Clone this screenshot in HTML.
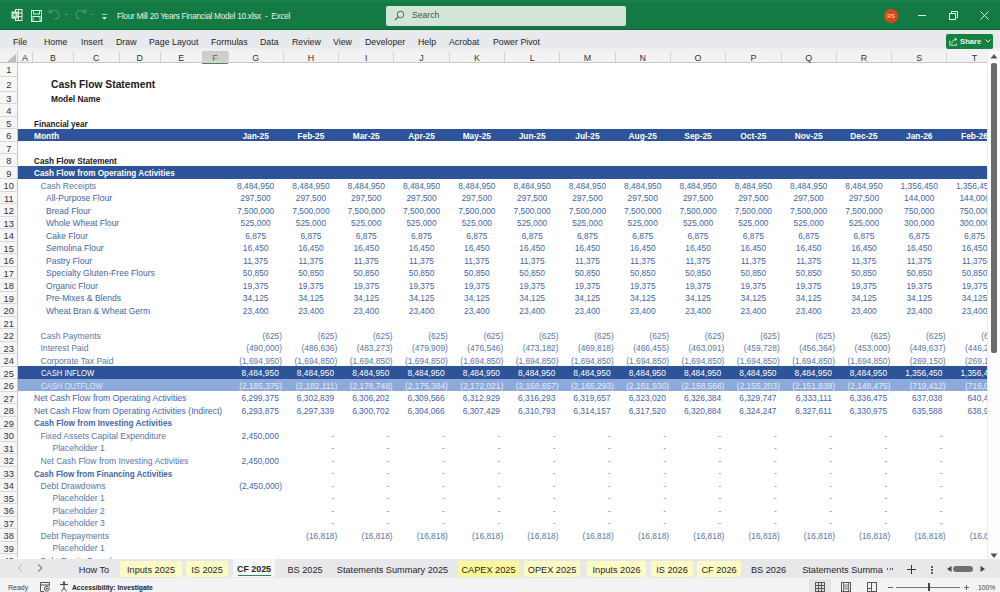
<!DOCTYPE html><html><head><meta charset="utf-8"><style>
*{margin:0;padding:0;box-sizing:border-box}
html,body{width:1000px;height:592px;overflow:hidden;background:#fff;font-family:"Liberation Sans",sans-serif}
.a{position:absolute;white-space:nowrap}
.t{position:absolute;white-space:nowrap;font-size:8.4px;line-height:12.5px;height:12.5px}
.b{font-weight:bold}
.c{text-align:center}
.r{text-align:right}
</style></head><body>
<div class="a" style="left:0;top:0;width:1000px;height:30.5px;background:#137a43"></div>
<div class="a" style="left:0;top:0;width:1000px;height:2px;background:#1a8049"></div>
<div class="a" style="left:0;top:29.3px;width:1000px;height:1.2px;background:#0f6535"></div>
<div class="a" style="left:117px;top:9px;font-size:8.3px;letter-spacing:-0.3px;line-height:14px;color:#e6f2ea">Flour Mill 20 Years Financial Model 10.xlsx&nbsp;&nbsp;-&nbsp;&nbsp;Excel</div>
<div class="a" style="left:385.5px;top:5.5px;width:240px;height:20.5px;background:#d2e5d7;border-radius:2px"></div>
<div class="a" style="left:412px;top:9px;font-size:8.6px;line-height:12px;color:#3b5a44">Search</div>
<svg class="a" style="left:394px;top:10px" width="11" height="11" viewBox="0 0 11 11"><circle cx="6.5" cy="4.5" r="3.3" fill="none" stroke="#4b6b52" stroke-width="1"/><line x1="4.1" y1="6.9" x2="1" y2="10" stroke="#4b6b52" stroke-width="1.1"/></svg>
<svg class="a" style="left:10.5px;top:9px" width="12" height="12" viewBox="0 0 12 12"><rect x="4.5" y="0.5" width="6.5" height="11" fill="none" stroke="#dff2e6" stroke-width="1"/><line x1="7.5" y1="0.5" x2="7.5" y2="11.5" stroke="#dff2e6"/><line x1="4.5" y1="4" x2="11" y2="4" stroke="#dff2e6"/><line x1="4.5" y1="7.5" x2="11" y2="7.5" stroke="#dff2e6"/><rect x="0.5" y="2.5" width="6" height="7" fill="#dff2e6"/><path d="M2 4.3 L5 7.7 M5 4.3 L2 7.7" stroke="#137a43" stroke-width="1"/></svg>
<svg class="a" style="left:31px;top:9.5px" width="11" height="12" viewBox="0 0 11 12"><rect x="0.5" y="0.5" width="10" height="11" fill="none" stroke="#dff2e6" stroke-width="1"/><rect x="2.5" y="0.5" width="6" height="3.5" fill="none" stroke="#dff2e6"/><rect x="2" y="6.5" width="7" height="5" fill="none" stroke="#dff2e6"/></svg>
<svg class="a" style="left:47.5px;top:7.5px" width="14" height="13" viewBox="0 0 14 13"><path d="M2 4 C5 1,11 2,11 7 C11 10,8 11,6 11" fill="none" stroke="#4f9a6c" stroke-width="1.1"/><path d="M1 1 L1.5 5 L5 4.5" fill="none" stroke="#4f9a6c" stroke-width="1.1"/></svg>
<div class="a" style="left:64.5px;top:14px;width:3px;height:1px;background:#4f9a6c"></div>
<svg class="a" style="left:73px;top:7.5px" width="14" height="13" viewBox="0 0 14 13"><path d="M12 4 C9 1,3 2,3 7 C3 10,6 11,8 11" fill="none" stroke="#4f9a6c" stroke-width="1.1"/><path d="M13 1 L12.5 5 L9 4.5" fill="none" stroke="#4f9a6c" stroke-width="1.1"/></svg>
<div class="a" style="left:90px;top:14px;width:3px;height:1px;background:#4f9a6c"></div>
<svg class="a" style="left:101px;top:12.5px" width="7" height="8" viewBox="0 0 8 8"><line x1="1" y1="1" x2="7" y2="1" stroke="#d0e6d8"/><path d="M1 4 L7 4 L4 7 Z" fill="#d0e6d8"/></svg>
<div class="a" style="left:884px;top:9px;width:14px;height:14px;border-radius:50%;background:#d9481c;color:#fbe3d8;font-size:5.5px;line-height:14px;text-align:center">RS</div>
<div class="a" style="left:918px;top:15px;width:8px;height:1px;background:#e8f3ec"></div>
<svg class="a" style="left:949px;top:11px" width="9" height="9" viewBox="0 0 9 9"><rect x="0.5" y="2.5" width="6" height="6" fill="none" stroke="#e8f3ec"/><path d="M2.5 2.5 V0.5 H8.5 V6.5 H6.5" fill="none" stroke="#e8f3ec"/></svg>
<svg class="a" style="left:980px;top:11px" width="9" height="9" viewBox="0 0 9 9"><path d="M0.5 0.5 L8.5 8.5 M8.5 0.5 L0.5 8.5" stroke="#e8f3ec" stroke-width="1"/></svg>
<div class="a" style="left:0;top:30px;width:1000px;height:21px;background:#e8e9ed"></div>
<div class="a" style="left:0;top:48px;width:1000px;height:3px;background:#efeff1"></div>
<div class="a" style="left:13px;top:36px;font-size:8.8px;line-height:12px;color:#262626">File</div>
<div class="a" style="left:44px;top:36px;font-size:8.8px;line-height:12px;color:#262626">Home</div>
<div class="a" style="left:81px;top:36px;font-size:8.8px;line-height:12px;color:#262626">Insert</div>
<div class="a" style="left:116px;top:36px;font-size:8.8px;line-height:12px;color:#262626">Draw</div>
<div class="a" style="left:149px;top:36px;font-size:8.8px;line-height:12px;color:#262626">Page Layout</div>
<div class="a" style="left:211px;top:36px;font-size:8.8px;line-height:12px;color:#262626">Formulas</div>
<div class="a" style="left:260px;top:36px;font-size:8.8px;line-height:12px;color:#262626">Data</div>
<div class="a" style="left:292px;top:36px;font-size:8.8px;line-height:12px;color:#262626">Review</div>
<div class="a" style="left:333px;top:36px;font-size:8.8px;line-height:12px;color:#262626">View</div>
<div class="a" style="left:365px;top:36px;font-size:8.8px;line-height:12px;color:#262626">Developer</div>
<div class="a" style="left:418px;top:36px;font-size:8.8px;line-height:12px;color:#262626">Help</div>
<div class="a" style="left:449px;top:36px;font-size:8.8px;line-height:12px;color:#262626">Acrobat</div>
<div class="a" style="left:493px;top:36px;font-size:8.8px;line-height:12px;color:#262626">Power Pivot</div>
<div class="a" style="left:946px;top:33.5px;width:46.5px;height:15.3px;background:#15803f;border-radius:2px"></div>
<div class="a b" style="left:960px;top:35.5px;font-size:7.7px;line-height:12px;color:#eaf6ee">Share</div>
<svg class="a" style="left:948.5px;top:36.5px" width="9" height="9" viewBox="0 0 9 9"><path d="M0.8 3.5 V8.2 H7.5 V6.5" fill="none" stroke="#dff2e6" stroke-width="0.9"/><path d="M2.8 6.5 C2.8 3.8,4.5 2.3,7.6 2.3" fill="none" stroke="#dff2e6" stroke-width="0.9"/><path d="M5.8 0.6 L7.8 2.3 L5.8 4" fill="none" stroke="#dff2e6" stroke-width="0.9"/></svg>
<svg class="a" style="left:985px;top:39px" width="6" height="4" viewBox="0 0 6 4"><path d="M0.5 0.5 L3 3 L5.5 0.5" fill="none" stroke="#fff" stroke-width="0.9"/></svg>
<div class="a" style="left:0;top:50.5px;width:1000px;height:1px;background:#d9d9d9"></div>
<div class="a" style="left:0;top:51px;width:988px;height:12px;background:#f2f2f2;border-bottom:1px solid #c8c8c8"></div>
<svg class="a" style="left:7px;top:54px" width="9" height="8" viewBox="0 0 9 8"><path d="M9 0 L9 8 L0 8 Z" fill="#bdbdbd"/></svg>
<div class="a" style="left:32.0px;top:52px;width:1px;height:11px;background:#d4d4d4"></div>
<div class="a" style="left:17.5px;top:52.5px;width:15.0px;text-align:center;font-size:8.9px;line-height:11px;color:#333">A</div>
<div class="a" style="left:73.0px;top:52px;width:1px;height:11px;background:#d4d4d4"></div>
<div class="a" style="left:32.5px;top:52.5px;width:41.0px;text-align:center;font-size:8.9px;line-height:11px;color:#333">B</div>
<div class="a" style="left:118.5px;top:52px;width:1px;height:11px;background:#d4d4d4"></div>
<div class="a" style="left:73.5px;top:52.5px;width:45.5px;text-align:center;font-size:8.9px;line-height:11px;color:#333">C</div>
<div class="a" style="left:160.0px;top:52px;width:1px;height:11px;background:#d4d4d4"></div>
<div class="a" style="left:119px;top:52.5px;width:41.5px;text-align:center;font-size:8.9px;line-height:11px;color:#333">D</div>
<div class="a" style="left:201.5px;top:52px;width:1px;height:11px;background:#d4d4d4"></div>
<div class="a" style="left:160.5px;top:52.5px;width:41.5px;text-align:center;font-size:8.9px;line-height:11px;color:#333">E</div>
<div class="a" style="left:202px;top:51px;width:26.0px;height:12.5px;background:linear-gradient(#cdcdcd 55%,#c9dccd);border-bottom:1.5px solid #567d62;box-sizing:border-box"></div>
<div class="a" style="left:227.5px;top:52px;width:1px;height:11px;background:#d4d4d4"></div>
<div class="a" style="left:202px;top:52.5px;width:26.0px;text-align:center;font-size:8.9px;line-height:11px;color:#666">F</div>
<div class="a" style="left:282.8px;top:52px;width:1px;height:11px;background:#d4d4d4"></div>
<div class="a" style="left:228.0px;top:52.5px;width:55.30000000000001px;text-align:center;font-size:8.9px;line-height:11px;color:#333">G</div>
<div class="a" style="left:338.1px;top:52px;width:1px;height:11px;background:#d4d4d4"></div>
<div class="a" style="left:283.3px;top:52.5px;width:55.30000000000001px;text-align:center;font-size:8.9px;line-height:11px;color:#333">H</div>
<div class="a" style="left:393.4px;top:52px;width:1px;height:11px;background:#d4d4d4"></div>
<div class="a" style="left:338.6px;top:52.5px;width:55.299999999999955px;text-align:center;font-size:8.9px;line-height:11px;color:#333">I</div>
<div class="a" style="left:448.7px;top:52px;width:1px;height:11px;background:#d4d4d4"></div>
<div class="a" style="left:393.9px;top:52.5px;width:55.30000000000001px;text-align:center;font-size:8.9px;line-height:11px;color:#333">J</div>
<div class="a" style="left:504.0px;top:52px;width:1px;height:11px;background:#d4d4d4"></div>
<div class="a" style="left:449.2px;top:52.5px;width:55.30000000000001px;text-align:center;font-size:8.9px;line-height:11px;color:#333">K</div>
<div class="a" style="left:559.3px;top:52px;width:1px;height:11px;background:#d4d4d4"></div>
<div class="a" style="left:504.5px;top:52.5px;width:55.299999999999955px;text-align:center;font-size:8.9px;line-height:11px;color:#333">L</div>
<div class="a" style="left:614.5999999999999px;top:52px;width:1px;height:11px;background:#d4d4d4"></div>
<div class="a" style="left:559.8px;top:52.5px;width:55.299999999999955px;text-align:center;font-size:8.9px;line-height:11px;color:#333">M</div>
<div class="a" style="left:669.9px;top:52px;width:1px;height:11px;background:#d4d4d4"></div>
<div class="a" style="left:615.0999999999999px;top:52.5px;width:55.30000000000007px;text-align:center;font-size:8.9px;line-height:11px;color:#333">N</div>
<div class="a" style="left:725.2px;top:52px;width:1px;height:11px;background:#d4d4d4"></div>
<div class="a" style="left:670.4px;top:52.5px;width:55.30000000000007px;text-align:center;font-size:8.9px;line-height:11px;color:#333">O</div>
<div class="a" style="left:780.5px;top:52px;width:1px;height:11px;background:#d4d4d4"></div>
<div class="a" style="left:725.7px;top:52.5px;width:55.299999999999955px;text-align:center;font-size:8.9px;line-height:11px;color:#333">P</div>
<div class="a" style="left:835.8px;top:52px;width:1px;height:11px;background:#d4d4d4"></div>
<div class="a" style="left:781.0px;top:52.5px;width:55.299999999999955px;text-align:center;font-size:8.9px;line-height:11px;color:#333">Q</div>
<div class="a" style="left:891.0999999999999px;top:52px;width:1px;height:11px;background:#d4d4d4"></div>
<div class="a" style="left:836.3px;top:52.5px;width:55.299999999999955px;text-align:center;font-size:8.9px;line-height:11px;color:#333">R</div>
<div class="a" style="left:946.4px;top:52px;width:1px;height:11px;background:#d4d4d4"></div>
<div class="a" style="left:891.5999999999999px;top:52.5px;width:55.30000000000007px;text-align:center;font-size:8.9px;line-height:11px;color:#333">S</div>
<div class="a" style="left:986.5px;top:52px;width:1px;height:11px;background:#d4d4d4"></div>
<div class="a" style="left:946.9px;top:52.5px;width:55.299999999999955px;text-align:center;font-size:8.9px;line-height:11px;color:#333">T</div>
<div class="a" style="left:17px;top:51px;width:1px;height:507px;background:#c8c8c8"></div>
<div class="a" style="left:0;top:63px;width:17px;height:495px;background:#f6f6f6"></div>
<div class="a" style="left:0;top:63px;width:17.5px;height:13px;text-align:center;font-size:9.3px;line-height:14px;color:#333">1</div>
<div class="a" style="left:0;top:75.5px;width:17px;height:1px;background:#d8d8d8"></div>
<div class="a" style="left:0;top:77.2px;width:17.5px;height:15.4px;text-align:center;font-size:9.3px;line-height:16.4px;color:#333">2</div>
<div class="a" style="left:0;top:90.9px;width:17px;height:1px;background:#d8d8d8"></div>
<div class="a" style="left:0;top:92.60000000000001px;width:17.5px;height:12.5px;text-align:center;font-size:9.3px;line-height:13.5px;color:#333">3</div>
<div class="a" style="left:0;top:103.4px;width:17px;height:1px;background:#d8d8d8"></div>
<div class="a" style="left:0;top:105.10000000000001px;width:17.5px;height:12.5px;text-align:center;font-size:9.3px;line-height:13.5px;color:#333">4</div>
<div class="a" style="left:0;top:115.9px;width:17px;height:1px;background:#d8d8d8"></div>
<div class="a" style="left:0;top:117.60000000000001px;width:17.5px;height:12.5px;text-align:center;font-size:9.3px;line-height:13.5px;color:#333">5</div>
<div class="a" style="left:0;top:128.4px;width:17px;height:1px;background:#d8d8d8"></div>
<div class="a" style="left:0;top:130.1px;width:17.5px;height:12.5px;text-align:center;font-size:9.3px;line-height:13.5px;color:#333">6</div>
<div class="a" style="left:0;top:140.9px;width:17px;height:1px;background:#d8d8d8"></div>
<div class="a" style="left:0;top:142.6px;width:17.5px;height:12.5px;text-align:center;font-size:9.3px;line-height:13.5px;color:#333">7</div>
<div class="a" style="left:0;top:153.4px;width:17px;height:1px;background:#d8d8d8"></div>
<div class="a" style="left:0;top:155.1px;width:17.5px;height:12.5px;text-align:center;font-size:9.3px;line-height:13.5px;color:#333">8</div>
<div class="a" style="left:0;top:165.9px;width:17px;height:1px;background:#d8d8d8"></div>
<div class="a" style="left:0;top:167.6px;width:17.5px;height:12.5px;text-align:center;font-size:9.3px;line-height:13.5px;color:#333">9</div>
<div class="a" style="left:0;top:178.4px;width:17px;height:1px;background:#d8d8d8"></div>
<div class="a" style="left:0;top:180.1px;width:17.5px;height:12.5px;text-align:center;font-size:9.3px;line-height:13.5px;color:#333">10</div>
<div class="a" style="left:0;top:190.9px;width:17px;height:1px;background:#d8d8d8"></div>
<div class="a" style="left:0;top:192.6px;width:17.5px;height:12.5px;text-align:center;font-size:9.3px;line-height:13.5px;color:#333">11</div>
<div class="a" style="left:0;top:203.4px;width:17px;height:1px;background:#d8d8d8"></div>
<div class="a" style="left:0;top:205.1px;width:17.5px;height:12.5px;text-align:center;font-size:9.3px;line-height:13.5px;color:#333">12</div>
<div class="a" style="left:0;top:215.9px;width:17px;height:1px;background:#d8d8d8"></div>
<div class="a" style="left:0;top:217.6px;width:17.5px;height:12.5px;text-align:center;font-size:9.3px;line-height:13.5px;color:#333">13</div>
<div class="a" style="left:0;top:228.4px;width:17px;height:1px;background:#d8d8d8"></div>
<div class="a" style="left:0;top:230.1px;width:17.5px;height:12.5px;text-align:center;font-size:9.3px;line-height:13.5px;color:#333">14</div>
<div class="a" style="left:0;top:240.9px;width:17px;height:1px;background:#d8d8d8"></div>
<div class="a" style="left:0;top:242.6px;width:17.5px;height:12.5px;text-align:center;font-size:9.3px;line-height:13.5px;color:#333">15</div>
<div class="a" style="left:0;top:253.4px;width:17px;height:1px;background:#d8d8d8"></div>
<div class="a" style="left:0;top:255.1px;width:17.5px;height:12.5px;text-align:center;font-size:9.3px;line-height:13.5px;color:#333">16</div>
<div class="a" style="left:0;top:265.9px;width:17px;height:1px;background:#d8d8d8"></div>
<div class="a" style="left:0;top:267.59999999999997px;width:17.5px;height:12.5px;text-align:center;font-size:9.3px;line-height:13.5px;color:#333">17</div>
<div class="a" style="left:0;top:278.4px;width:17px;height:1px;background:#d8d8d8"></div>
<div class="a" style="left:0;top:280.09999999999997px;width:17.5px;height:12.5px;text-align:center;font-size:9.3px;line-height:13.5px;color:#333">18</div>
<div class="a" style="left:0;top:290.9px;width:17px;height:1px;background:#d8d8d8"></div>
<div class="a" style="left:0;top:292.59999999999997px;width:17.5px;height:12.5px;text-align:center;font-size:9.3px;line-height:13.5px;color:#333">19</div>
<div class="a" style="left:0;top:303.4px;width:17px;height:1px;background:#d8d8d8"></div>
<div class="a" style="left:0;top:305.09999999999997px;width:17.5px;height:12.5px;text-align:center;font-size:9.3px;line-height:13.5px;color:#333">20</div>
<div class="a" style="left:0;top:315.9px;width:17px;height:1px;background:#d8d8d8"></div>
<div class="a" style="left:0;top:317.59999999999997px;width:17.5px;height:12.5px;text-align:center;font-size:9.3px;line-height:13.5px;color:#333">21</div>
<div class="a" style="left:0;top:328.4px;width:17px;height:1px;background:#d8d8d8"></div>
<div class="a" style="left:0;top:330.09999999999997px;width:17.5px;height:12.5px;text-align:center;font-size:9.3px;line-height:13.5px;color:#333">22</div>
<div class="a" style="left:0;top:340.9px;width:17px;height:1px;background:#d8d8d8"></div>
<div class="a" style="left:0;top:342.59999999999997px;width:17.5px;height:12.5px;text-align:center;font-size:9.3px;line-height:13.5px;color:#333">23</div>
<div class="a" style="left:0;top:353.4px;width:17px;height:1px;background:#d8d8d8"></div>
<div class="a" style="left:0;top:355.09999999999997px;width:17.5px;height:12.5px;text-align:center;font-size:9.3px;line-height:13.5px;color:#333">24</div>
<div class="a" style="left:0;top:365.9px;width:17px;height:1px;background:#d8d8d8"></div>
<div class="a" style="left:0;top:367.59999999999997px;width:17.5px;height:12.5px;text-align:center;font-size:9.3px;line-height:13.5px;color:#333">25</div>
<div class="a" style="left:0;top:378.4px;width:17px;height:1px;background:#d8d8d8"></div>
<div class="a" style="left:0;top:380.09999999999997px;width:17.5px;height:12.5px;text-align:center;font-size:9.3px;line-height:13.5px;color:#333">26</div>
<div class="a" style="left:0;top:390.9px;width:17px;height:1px;background:#d8d8d8"></div>
<div class="a" style="left:0;top:392.59999999999997px;width:17.5px;height:12.5px;text-align:center;font-size:9.3px;line-height:13.5px;color:#333">27</div>
<div class="a" style="left:0;top:403.4px;width:17px;height:1px;background:#d8d8d8"></div>
<div class="a" style="left:0;top:405.09999999999997px;width:17.5px;height:12.5px;text-align:center;font-size:9.3px;line-height:13.5px;color:#333">28</div>
<div class="a" style="left:0;top:415.9px;width:17px;height:1px;background:#d8d8d8"></div>
<div class="a" style="left:0;top:417.59999999999997px;width:17.5px;height:12.5px;text-align:center;font-size:9.3px;line-height:13.5px;color:#333">29</div>
<div class="a" style="left:0;top:428.4px;width:17px;height:1px;background:#d8d8d8"></div>
<div class="a" style="left:0;top:430.09999999999997px;width:17.5px;height:12.5px;text-align:center;font-size:9.3px;line-height:13.5px;color:#333">30</div>
<div class="a" style="left:0;top:440.9px;width:17px;height:1px;background:#d8d8d8"></div>
<div class="a" style="left:0;top:442.59999999999997px;width:17.5px;height:12.5px;text-align:center;font-size:9.3px;line-height:13.5px;color:#333">31</div>
<div class="a" style="left:0;top:453.4px;width:17px;height:1px;background:#d8d8d8"></div>
<div class="a" style="left:0;top:455.09999999999997px;width:17.5px;height:12.5px;text-align:center;font-size:9.3px;line-height:13.5px;color:#333">32</div>
<div class="a" style="left:0;top:465.9px;width:17px;height:1px;background:#d8d8d8"></div>
<div class="a" style="left:0;top:467.59999999999997px;width:17.5px;height:12.5px;text-align:center;font-size:9.3px;line-height:13.5px;color:#333">33</div>
<div class="a" style="left:0;top:478.4px;width:17px;height:1px;background:#d8d8d8"></div>
<div class="a" style="left:0;top:480.09999999999997px;width:17.5px;height:12.5px;text-align:center;font-size:9.3px;line-height:13.5px;color:#333">34</div>
<div class="a" style="left:0;top:490.9px;width:17px;height:1px;background:#d8d8d8"></div>
<div class="a" style="left:0;top:492.59999999999997px;width:17.5px;height:12.5px;text-align:center;font-size:9.3px;line-height:13.5px;color:#333">35</div>
<div class="a" style="left:0;top:503.4px;width:17px;height:1px;background:#d8d8d8"></div>
<div class="a" style="left:0;top:505.09999999999997px;width:17.5px;height:12.5px;text-align:center;font-size:9.3px;line-height:13.5px;color:#333">36</div>
<div class="a" style="left:0;top:515.9px;width:17px;height:1px;background:#d8d8d8"></div>
<div class="a" style="left:0;top:517.6px;width:17.5px;height:12.5px;text-align:center;font-size:9.3px;line-height:13.5px;color:#333">37</div>
<div class="a" style="left:0;top:528.4px;width:17px;height:1px;background:#d8d8d8"></div>
<div class="a" style="left:0;top:530.1px;width:17.5px;height:12.5px;text-align:center;font-size:9.3px;line-height:13.5px;color:#333">38</div>
<div class="a" style="left:0;top:540.9px;width:17px;height:1px;background:#d8d8d8"></div>
<div class="a" style="left:0;top:542.6px;width:17.5px;height:12.5px;text-align:center;font-size:9.3px;line-height:13.5px;color:#333">39</div>
<div class="a" style="left:0;top:553.4px;width:17px;height:1px;background:#d8d8d8"></div>
<div class="a" style="left:0;top:555.1px;width:17.5px;height:12.5px;text-align:center;font-size:9.3px;line-height:13.5px;color:#333">40</div>
<div class="a" style="left:0;top:565.9px;width:17px;height:1px;background:#d8d8d8"></div>
<div class="a" style="left:18px;top:128.9px;width:969px;height:12.5px;background:#2d5398"></div>
<div class="a" style="left:18px;top:166.4px;width:969px;height:12.5px;background:#2d5398"></div>
<div class="a" style="left:18px;top:366.4px;width:969px;height:12.5px;background:#2d5398"></div>
<div class="a" style="left:18px;top:378.9px;width:969px;height:12.5px;background:#8eaadb"></div>
<div class="t b" style="left:51px;top:79.2px;color:#1a1a1a;font-size:10.3px">Cash Flow Statement</div>
<div class="t b" style="left:51px;top:93.2px;color:#1a1a1a;font-size:8.4px">Model Name</div>
<div class="t b" style="left:34px;top:118.2px;color:#1a1a1a;font-size:8.4px;transform:scaleX(0.96);transform-origin:0 0">Financial year</div>
<div class="t b" style="left:34px;top:129.70000000000002px;color:#ffffff;font-size:8.4px">Month</div>
<div class="t b" style="left:34px;top:155.70000000000002px;color:#1a1a1a;font-size:8.2px">Cash Flow Statement</div>
<div class="t b" style="left:34px;top:168.20000000000002px;color:#ffffff;font-size:8.2px">Cash Flow from Operating Activities</div>
<div class="t" style="left:40.5px;top:179.70000000000002px;color:#5876a6;font-size:8.55px">Cash Receipts</div>
<div class="t" style="left:46px;top:192.20000000000002px;color:#3f66a6;font-size:8.55px">All-Purpose Flour</div>
<div class="t" style="left:46px;top:204.70000000000002px;color:#3f66a6;font-size:8.55px">Bread Flour</div>
<div class="t" style="left:46px;top:217.20000000000002px;color:#3f66a6;font-size:8.55px">Whole Wheat Flour</div>
<div class="t" style="left:46px;top:229.70000000000002px;color:#3f66a6;font-size:8.55px">Cake Flour</div>
<div class="t" style="left:46px;top:242.20000000000002px;color:#3f66a6;font-size:8.55px">Semolina Flour</div>
<div class="t" style="left:46px;top:254.70000000000002px;color:#3f66a6;font-size:8.55px">Pastry Flour</div>
<div class="t" style="left:46px;top:267.2px;color:#3f66a6;font-size:8.55px">Specialty Gluten-Free Flours</div>
<div class="t" style="left:46px;top:279.7px;color:#3f66a6;font-size:8.55px">Organic Flour</div>
<div class="t" style="left:46px;top:292.2px;color:#3f66a6;font-size:8.55px">Pre-Mixes &amp; Blends</div>
<div class="t" style="left:46px;top:304.7px;color:#3f66a6;font-size:8.55px">Wheat Bran &amp; Wheat Germ</div>
<div class="t" style="left:40.5px;top:329.7px;color:#5876a6;font-size:8.55px">Cash Payments</div>
<div class="t" style="left:40.5px;top:342.2px;color:#5876a6;font-size:8.55px">Interest Paid</div>
<div class="t" style="left:40.5px;top:354.7px;color:#5876a6;font-size:8.55px">Corporate Tax Paid</div>
<div class="t" style="left:40.5px;top:367.2px;color:#ffffff;font-size:8.5px;transform:scaleX(0.9);transform-origin:0 0">CASH INFLOW</div>
<div class="t" style="left:40.5px;top:379.7px;color:#dde6f5;font-size:8.5px;transform:scaleX(0.9);transform-origin:0 0">CASH OUTFLOW</div>
<div class="t" style="left:34px;top:392.2px;color:#3f66a6;font-size:8.65px">Net Cash Flow from Operating Activities</div>
<div class="t" style="left:34px;top:404.7px;color:#3f66a6;font-size:8.6px">Net Cash Flow from Operating Activities (Indirect)</div>
<div class="t b" style="left:34px;top:418.4px;color:#3f66a6;font-size:8.2px">Cash Flow from Investing Activities</div>
<div class="t" style="left:40.5px;top:429.7px;color:#5876a6;font-size:8.55px">Fixed Assets Capital Expenditure</div>
<div class="t" style="left:52.5px;top:442.2px;color:#5876a6;font-size:8.55px">Placeholder 1</div>
<div class="t" style="left:40.5px;top:454.7px;color:#5876a6;font-size:8.55px">Net Cash Flow from Investing Activities</div>
<div class="t b" style="left:34px;top:468.4px;color:#3f66a6;font-size:8.3px;transform:scaleX(0.97);transform-origin:0 0">Cash Flow from Financing Activities</div>
<div class="t" style="left:40.5px;top:479.7px;color:#5876a6;font-size:8.55px">Debt Drawdowns</div>
<div class="t" style="left:52.5px;top:492.2px;color:#5876a6;font-size:8.55px">Placeholder 1</div>
<div class="t" style="left:52.5px;top:504.7px;color:#5876a6;font-size:8.55px">Placeholder 2</div>
<div class="t" style="left:52.5px;top:517.1999999999999px;color:#5876a6;font-size:8.55px">Placeholder 3</div>
<div class="t" style="left:40.5px;top:529.6999999999999px;color:#5876a6;font-size:8.55px">Debt Repayments</div>
<div class="t" style="left:52.5px;top:542.1999999999999px;color:#5876a6;font-size:8.55px">Placeholder 1</div>
<div class="t" style="left:40.5px;top:554.6999999999999px;color:#5876a6;font-size:8.55px">Debt Equity Drawdowns</div>
<div class="t c b" style="left:228.0px;top:129.70000000000002px;width:55.3px;color:#ffffff">Jan-25</div>
<div class="t c b" style="left:283.3px;top:129.70000000000002px;width:55.3px;color:#ffffff">Feb-25</div>
<div class="t c b" style="left:338.6px;top:129.70000000000002px;width:55.3px;color:#ffffff">Mar-25</div>
<div class="t c b" style="left:393.9px;top:129.70000000000002px;width:55.3px;color:#ffffff">Apr-25</div>
<div class="t c b" style="left:449.2px;top:129.70000000000002px;width:55.3px;color:#ffffff">May-25</div>
<div class="t c b" style="left:504.5px;top:129.70000000000002px;width:55.3px;color:#ffffff">Jun-25</div>
<div class="t c b" style="left:559.8px;top:129.70000000000002px;width:55.3px;color:#ffffff">Jul-25</div>
<div class="t c b" style="left:615.0999999999999px;top:129.70000000000002px;width:55.3px;color:#ffffff">Aug-25</div>
<div class="t c b" style="left:670.4px;top:129.70000000000002px;width:55.3px;color:#ffffff">Sep-25</div>
<div class="t c b" style="left:725.7px;top:129.70000000000002px;width:55.3px;color:#ffffff">Oct-25</div>
<div class="t c b" style="left:781.0px;top:129.70000000000002px;width:55.3px;color:#ffffff">Nov-25</div>
<div class="t c b" style="left:836.3px;top:129.70000000000002px;width:55.3px;color:#ffffff">Dec-25</div>
<div class="t c b" style="left:891.5999999999999px;top:129.70000000000002px;width:55.3px;color:#ffffff">Jan-26</div>
<div class="t c b" style="left:946.9px;top:129.70000000000002px;width:55.3px;color:#ffffff">Feb-26</div>
<div class="t c" style="left:228.0px;top:179.70000000000002px;width:55.3px;color:#3f66a6">8,484,950</div>
<div class="t c" style="left:283.3px;top:179.70000000000002px;width:55.3px;color:#3f66a6">8,484,950</div>
<div class="t c" style="left:338.6px;top:179.70000000000002px;width:55.3px;color:#3f66a6">8,484,950</div>
<div class="t c" style="left:393.9px;top:179.70000000000002px;width:55.3px;color:#3f66a6">8,484,950</div>
<div class="t c" style="left:449.2px;top:179.70000000000002px;width:55.3px;color:#3f66a6">8,484,950</div>
<div class="t c" style="left:504.5px;top:179.70000000000002px;width:55.3px;color:#3f66a6">8,484,950</div>
<div class="t c" style="left:559.8px;top:179.70000000000002px;width:55.3px;color:#3f66a6">8,484,950</div>
<div class="t c" style="left:615.0999999999999px;top:179.70000000000002px;width:55.3px;color:#3f66a6">8,484,950</div>
<div class="t c" style="left:670.4px;top:179.70000000000002px;width:55.3px;color:#3f66a6">8,484,950</div>
<div class="t c" style="left:725.7px;top:179.70000000000002px;width:55.3px;color:#3f66a6">8,484,950</div>
<div class="t c" style="left:781.0px;top:179.70000000000002px;width:55.3px;color:#3f66a6">8,484,950</div>
<div class="t c" style="left:836.3px;top:179.70000000000002px;width:55.3px;color:#3f66a6">8,484,950</div>
<div class="t c" style="left:891.5999999999999px;top:179.70000000000002px;width:55.3px;color:#3f66a6">1,356,450</div>
<div class="t c" style="left:946.9px;top:179.70000000000002px;width:55.3px;color:#3f66a6">1,356,450</div>
<div class="t c" style="left:228.0px;top:192.20000000000002px;width:55.3px;color:#3f66a6">297,500</div>
<div class="t c" style="left:283.3px;top:192.20000000000002px;width:55.3px;color:#3f66a6">297,500</div>
<div class="t c" style="left:338.6px;top:192.20000000000002px;width:55.3px;color:#3f66a6">297,500</div>
<div class="t c" style="left:393.9px;top:192.20000000000002px;width:55.3px;color:#3f66a6">297,500</div>
<div class="t c" style="left:449.2px;top:192.20000000000002px;width:55.3px;color:#3f66a6">297,500</div>
<div class="t c" style="left:504.5px;top:192.20000000000002px;width:55.3px;color:#3f66a6">297,500</div>
<div class="t c" style="left:559.8px;top:192.20000000000002px;width:55.3px;color:#3f66a6">297,500</div>
<div class="t c" style="left:615.0999999999999px;top:192.20000000000002px;width:55.3px;color:#3f66a6">297,500</div>
<div class="t c" style="left:670.4px;top:192.20000000000002px;width:55.3px;color:#3f66a6">297,500</div>
<div class="t c" style="left:725.7px;top:192.20000000000002px;width:55.3px;color:#3f66a6">297,500</div>
<div class="t c" style="left:781.0px;top:192.20000000000002px;width:55.3px;color:#3f66a6">297,500</div>
<div class="t c" style="left:836.3px;top:192.20000000000002px;width:55.3px;color:#3f66a6">297,500</div>
<div class="t c" style="left:891.5999999999999px;top:192.20000000000002px;width:55.3px;color:#3f66a6">144,000</div>
<div class="t c" style="left:946.9px;top:192.20000000000002px;width:55.3px;color:#3f66a6">144,000</div>
<div class="t c" style="left:228.0px;top:204.70000000000002px;width:55.3px;color:#3f66a6">7,500,000</div>
<div class="t c" style="left:283.3px;top:204.70000000000002px;width:55.3px;color:#3f66a6">7,500,000</div>
<div class="t c" style="left:338.6px;top:204.70000000000002px;width:55.3px;color:#3f66a6">7,500,000</div>
<div class="t c" style="left:393.9px;top:204.70000000000002px;width:55.3px;color:#3f66a6">7,500,000</div>
<div class="t c" style="left:449.2px;top:204.70000000000002px;width:55.3px;color:#3f66a6">7,500,000</div>
<div class="t c" style="left:504.5px;top:204.70000000000002px;width:55.3px;color:#3f66a6">7,500,000</div>
<div class="t c" style="left:559.8px;top:204.70000000000002px;width:55.3px;color:#3f66a6">7,500,000</div>
<div class="t c" style="left:615.0999999999999px;top:204.70000000000002px;width:55.3px;color:#3f66a6">7,500,000</div>
<div class="t c" style="left:670.4px;top:204.70000000000002px;width:55.3px;color:#3f66a6">7,500,000</div>
<div class="t c" style="left:725.7px;top:204.70000000000002px;width:55.3px;color:#3f66a6">7,500,000</div>
<div class="t c" style="left:781.0px;top:204.70000000000002px;width:55.3px;color:#3f66a6">7,500,000</div>
<div class="t c" style="left:836.3px;top:204.70000000000002px;width:55.3px;color:#3f66a6">7,500,000</div>
<div class="t c" style="left:891.5999999999999px;top:204.70000000000002px;width:55.3px;color:#3f66a6">750,000</div>
<div class="t c" style="left:946.9px;top:204.70000000000002px;width:55.3px;color:#3f66a6">750,000</div>
<div class="t c" style="left:228.0px;top:217.20000000000002px;width:55.3px;color:#3f66a6">525,000</div>
<div class="t c" style="left:283.3px;top:217.20000000000002px;width:55.3px;color:#3f66a6">525,000</div>
<div class="t c" style="left:338.6px;top:217.20000000000002px;width:55.3px;color:#3f66a6">525,000</div>
<div class="t c" style="left:393.9px;top:217.20000000000002px;width:55.3px;color:#3f66a6">525,000</div>
<div class="t c" style="left:449.2px;top:217.20000000000002px;width:55.3px;color:#3f66a6">525,000</div>
<div class="t c" style="left:504.5px;top:217.20000000000002px;width:55.3px;color:#3f66a6">525,000</div>
<div class="t c" style="left:559.8px;top:217.20000000000002px;width:55.3px;color:#3f66a6">525,000</div>
<div class="t c" style="left:615.0999999999999px;top:217.20000000000002px;width:55.3px;color:#3f66a6">525,000</div>
<div class="t c" style="left:670.4px;top:217.20000000000002px;width:55.3px;color:#3f66a6">525,000</div>
<div class="t c" style="left:725.7px;top:217.20000000000002px;width:55.3px;color:#3f66a6">525,000</div>
<div class="t c" style="left:781.0px;top:217.20000000000002px;width:55.3px;color:#3f66a6">525,000</div>
<div class="t c" style="left:836.3px;top:217.20000000000002px;width:55.3px;color:#3f66a6">525,000</div>
<div class="t c" style="left:891.5999999999999px;top:217.20000000000002px;width:55.3px;color:#3f66a6">300,000</div>
<div class="t c" style="left:946.9px;top:217.20000000000002px;width:55.3px;color:#3f66a6">300,000</div>
<div class="t c" style="left:228.0px;top:229.70000000000002px;width:55.3px;color:#3f66a6">6,875</div>
<div class="t c" style="left:283.3px;top:229.70000000000002px;width:55.3px;color:#3f66a6">6,875</div>
<div class="t c" style="left:338.6px;top:229.70000000000002px;width:55.3px;color:#3f66a6">6,875</div>
<div class="t c" style="left:393.9px;top:229.70000000000002px;width:55.3px;color:#3f66a6">6,875</div>
<div class="t c" style="left:449.2px;top:229.70000000000002px;width:55.3px;color:#3f66a6">6,875</div>
<div class="t c" style="left:504.5px;top:229.70000000000002px;width:55.3px;color:#3f66a6">6,875</div>
<div class="t c" style="left:559.8px;top:229.70000000000002px;width:55.3px;color:#3f66a6">6,875</div>
<div class="t c" style="left:615.0999999999999px;top:229.70000000000002px;width:55.3px;color:#3f66a6">6,875</div>
<div class="t c" style="left:670.4px;top:229.70000000000002px;width:55.3px;color:#3f66a6">6,875</div>
<div class="t c" style="left:725.7px;top:229.70000000000002px;width:55.3px;color:#3f66a6">6,875</div>
<div class="t c" style="left:781.0px;top:229.70000000000002px;width:55.3px;color:#3f66a6">6,875</div>
<div class="t c" style="left:836.3px;top:229.70000000000002px;width:55.3px;color:#3f66a6">6,875</div>
<div class="t c" style="left:891.5999999999999px;top:229.70000000000002px;width:55.3px;color:#3f66a6">6,875</div>
<div class="t c" style="left:946.9px;top:229.70000000000002px;width:55.3px;color:#3f66a6">6,875</div>
<div class="t c" style="left:228.0px;top:242.20000000000002px;width:55.3px;color:#3f66a6">16,450</div>
<div class="t c" style="left:283.3px;top:242.20000000000002px;width:55.3px;color:#3f66a6">16,450</div>
<div class="t c" style="left:338.6px;top:242.20000000000002px;width:55.3px;color:#3f66a6">16,450</div>
<div class="t c" style="left:393.9px;top:242.20000000000002px;width:55.3px;color:#3f66a6">16,450</div>
<div class="t c" style="left:449.2px;top:242.20000000000002px;width:55.3px;color:#3f66a6">16,450</div>
<div class="t c" style="left:504.5px;top:242.20000000000002px;width:55.3px;color:#3f66a6">16,450</div>
<div class="t c" style="left:559.8px;top:242.20000000000002px;width:55.3px;color:#3f66a6">16,450</div>
<div class="t c" style="left:615.0999999999999px;top:242.20000000000002px;width:55.3px;color:#3f66a6">16,450</div>
<div class="t c" style="left:670.4px;top:242.20000000000002px;width:55.3px;color:#3f66a6">16,450</div>
<div class="t c" style="left:725.7px;top:242.20000000000002px;width:55.3px;color:#3f66a6">16,450</div>
<div class="t c" style="left:781.0px;top:242.20000000000002px;width:55.3px;color:#3f66a6">16,450</div>
<div class="t c" style="left:836.3px;top:242.20000000000002px;width:55.3px;color:#3f66a6">16,450</div>
<div class="t c" style="left:891.5999999999999px;top:242.20000000000002px;width:55.3px;color:#3f66a6">16,450</div>
<div class="t c" style="left:946.9px;top:242.20000000000002px;width:55.3px;color:#3f66a6">16,450</div>
<div class="t c" style="left:228.0px;top:254.70000000000002px;width:55.3px;color:#3f66a6">11,375</div>
<div class="t c" style="left:283.3px;top:254.70000000000002px;width:55.3px;color:#3f66a6">11,375</div>
<div class="t c" style="left:338.6px;top:254.70000000000002px;width:55.3px;color:#3f66a6">11,375</div>
<div class="t c" style="left:393.9px;top:254.70000000000002px;width:55.3px;color:#3f66a6">11,375</div>
<div class="t c" style="left:449.2px;top:254.70000000000002px;width:55.3px;color:#3f66a6">11,375</div>
<div class="t c" style="left:504.5px;top:254.70000000000002px;width:55.3px;color:#3f66a6">11,375</div>
<div class="t c" style="left:559.8px;top:254.70000000000002px;width:55.3px;color:#3f66a6">11,375</div>
<div class="t c" style="left:615.0999999999999px;top:254.70000000000002px;width:55.3px;color:#3f66a6">11,375</div>
<div class="t c" style="left:670.4px;top:254.70000000000002px;width:55.3px;color:#3f66a6">11,375</div>
<div class="t c" style="left:725.7px;top:254.70000000000002px;width:55.3px;color:#3f66a6">11,375</div>
<div class="t c" style="left:781.0px;top:254.70000000000002px;width:55.3px;color:#3f66a6">11,375</div>
<div class="t c" style="left:836.3px;top:254.70000000000002px;width:55.3px;color:#3f66a6">11,375</div>
<div class="t c" style="left:891.5999999999999px;top:254.70000000000002px;width:55.3px;color:#3f66a6">11,375</div>
<div class="t c" style="left:946.9px;top:254.70000000000002px;width:55.3px;color:#3f66a6">11,375</div>
<div class="t c" style="left:228.0px;top:267.2px;width:55.3px;color:#3f66a6">50,850</div>
<div class="t c" style="left:283.3px;top:267.2px;width:55.3px;color:#3f66a6">50,850</div>
<div class="t c" style="left:338.6px;top:267.2px;width:55.3px;color:#3f66a6">50,850</div>
<div class="t c" style="left:393.9px;top:267.2px;width:55.3px;color:#3f66a6">50,850</div>
<div class="t c" style="left:449.2px;top:267.2px;width:55.3px;color:#3f66a6">50,850</div>
<div class="t c" style="left:504.5px;top:267.2px;width:55.3px;color:#3f66a6">50,850</div>
<div class="t c" style="left:559.8px;top:267.2px;width:55.3px;color:#3f66a6">50,850</div>
<div class="t c" style="left:615.0999999999999px;top:267.2px;width:55.3px;color:#3f66a6">50,850</div>
<div class="t c" style="left:670.4px;top:267.2px;width:55.3px;color:#3f66a6">50,850</div>
<div class="t c" style="left:725.7px;top:267.2px;width:55.3px;color:#3f66a6">50,850</div>
<div class="t c" style="left:781.0px;top:267.2px;width:55.3px;color:#3f66a6">50,850</div>
<div class="t c" style="left:836.3px;top:267.2px;width:55.3px;color:#3f66a6">50,850</div>
<div class="t c" style="left:891.5999999999999px;top:267.2px;width:55.3px;color:#3f66a6">50,850</div>
<div class="t c" style="left:946.9px;top:267.2px;width:55.3px;color:#3f66a6">50,850</div>
<div class="t c" style="left:228.0px;top:279.7px;width:55.3px;color:#3f66a6">19,375</div>
<div class="t c" style="left:283.3px;top:279.7px;width:55.3px;color:#3f66a6">19,375</div>
<div class="t c" style="left:338.6px;top:279.7px;width:55.3px;color:#3f66a6">19,375</div>
<div class="t c" style="left:393.9px;top:279.7px;width:55.3px;color:#3f66a6">19,375</div>
<div class="t c" style="left:449.2px;top:279.7px;width:55.3px;color:#3f66a6">19,375</div>
<div class="t c" style="left:504.5px;top:279.7px;width:55.3px;color:#3f66a6">19,375</div>
<div class="t c" style="left:559.8px;top:279.7px;width:55.3px;color:#3f66a6">19,375</div>
<div class="t c" style="left:615.0999999999999px;top:279.7px;width:55.3px;color:#3f66a6">19,375</div>
<div class="t c" style="left:670.4px;top:279.7px;width:55.3px;color:#3f66a6">19,375</div>
<div class="t c" style="left:725.7px;top:279.7px;width:55.3px;color:#3f66a6">19,375</div>
<div class="t c" style="left:781.0px;top:279.7px;width:55.3px;color:#3f66a6">19,375</div>
<div class="t c" style="left:836.3px;top:279.7px;width:55.3px;color:#3f66a6">19,375</div>
<div class="t c" style="left:891.5999999999999px;top:279.7px;width:55.3px;color:#3f66a6">19,375</div>
<div class="t c" style="left:946.9px;top:279.7px;width:55.3px;color:#3f66a6">19,375</div>
<div class="t c" style="left:228.0px;top:292.2px;width:55.3px;color:#3f66a6">34,125</div>
<div class="t c" style="left:283.3px;top:292.2px;width:55.3px;color:#3f66a6">34,125</div>
<div class="t c" style="left:338.6px;top:292.2px;width:55.3px;color:#3f66a6">34,125</div>
<div class="t c" style="left:393.9px;top:292.2px;width:55.3px;color:#3f66a6">34,125</div>
<div class="t c" style="left:449.2px;top:292.2px;width:55.3px;color:#3f66a6">34,125</div>
<div class="t c" style="left:504.5px;top:292.2px;width:55.3px;color:#3f66a6">34,125</div>
<div class="t c" style="left:559.8px;top:292.2px;width:55.3px;color:#3f66a6">34,125</div>
<div class="t c" style="left:615.0999999999999px;top:292.2px;width:55.3px;color:#3f66a6">34,125</div>
<div class="t c" style="left:670.4px;top:292.2px;width:55.3px;color:#3f66a6">34,125</div>
<div class="t c" style="left:725.7px;top:292.2px;width:55.3px;color:#3f66a6">34,125</div>
<div class="t c" style="left:781.0px;top:292.2px;width:55.3px;color:#3f66a6">34,125</div>
<div class="t c" style="left:836.3px;top:292.2px;width:55.3px;color:#3f66a6">34,125</div>
<div class="t c" style="left:891.5999999999999px;top:292.2px;width:55.3px;color:#3f66a6">34,125</div>
<div class="t c" style="left:946.9px;top:292.2px;width:55.3px;color:#3f66a6">34,125</div>
<div class="t c" style="left:228.0px;top:304.7px;width:55.3px;color:#3f66a6">23,400</div>
<div class="t c" style="left:283.3px;top:304.7px;width:55.3px;color:#3f66a6">23,400</div>
<div class="t c" style="left:338.6px;top:304.7px;width:55.3px;color:#3f66a6">23,400</div>
<div class="t c" style="left:393.9px;top:304.7px;width:55.3px;color:#3f66a6">23,400</div>
<div class="t c" style="left:449.2px;top:304.7px;width:55.3px;color:#3f66a6">23,400</div>
<div class="t c" style="left:504.5px;top:304.7px;width:55.3px;color:#3f66a6">23,400</div>
<div class="t c" style="left:559.8px;top:304.7px;width:55.3px;color:#3f66a6">23,400</div>
<div class="t c" style="left:615.0999999999999px;top:304.7px;width:55.3px;color:#3f66a6">23,400</div>
<div class="t c" style="left:670.4px;top:304.7px;width:55.3px;color:#3f66a6">23,400</div>
<div class="t c" style="left:725.7px;top:304.7px;width:55.3px;color:#3f66a6">23,400</div>
<div class="t c" style="left:781.0px;top:304.7px;width:55.3px;color:#3f66a6">23,400</div>
<div class="t c" style="left:836.3px;top:304.7px;width:55.3px;color:#3f66a6">23,400</div>
<div class="t c" style="left:891.5999999999999px;top:304.7px;width:55.3px;color:#3f66a6">23,400</div>
<div class="t c" style="left:946.9px;top:304.7px;width:55.3px;color:#3f66a6">23,400</div>
<div class="t r" style="left:228.0px;top:329.7px;width:54.0px;color:#5876a6">(625)</div>
<div class="t r" style="left:283.3px;top:329.7px;width:54.0px;color:#5876a6">(625)</div>
<div class="t r" style="left:338.6px;top:329.7px;width:54.0px;color:#5876a6">(625)</div>
<div class="t r" style="left:393.9px;top:329.7px;width:54.0px;color:#5876a6">(625)</div>
<div class="t r" style="left:449.2px;top:329.7px;width:54.0px;color:#5876a6">(625)</div>
<div class="t r" style="left:504.5px;top:329.7px;width:54.0px;color:#5876a6">(625)</div>
<div class="t r" style="left:559.8px;top:329.7px;width:54.0px;color:#5876a6">(625)</div>
<div class="t r" style="left:615.0999999999999px;top:329.7px;width:54.0px;color:#5876a6">(625)</div>
<div class="t r" style="left:670.4px;top:329.7px;width:54.0px;color:#5876a6">(625)</div>
<div class="t r" style="left:725.7px;top:329.7px;width:54.0px;color:#5876a6">(625)</div>
<div class="t r" style="left:781.0px;top:329.7px;width:54.0px;color:#5876a6">(625)</div>
<div class="t r" style="left:836.3px;top:329.7px;width:54.0px;color:#5876a6">(625)</div>
<div class="t r" style="left:891.5999999999999px;top:329.7px;width:54.0px;color:#5876a6">(625)</div>
<div class="t r" style="left:946.9px;top:329.7px;width:54.0px;color:#5876a6">(625)</div>
<div class="t r" style="left:228.0px;top:342.2px;width:54.0px;color:#5876a6">(490,000)</div>
<div class="t r" style="left:283.3px;top:342.2px;width:54.0px;color:#5876a6">(486,636)</div>
<div class="t r" style="left:338.6px;top:342.2px;width:54.0px;color:#5876a6">(483,273)</div>
<div class="t r" style="left:393.9px;top:342.2px;width:54.0px;color:#5876a6">(479,909)</div>
<div class="t r" style="left:449.2px;top:342.2px;width:54.0px;color:#5876a6">(476,546)</div>
<div class="t r" style="left:504.5px;top:342.2px;width:54.0px;color:#5876a6">(473,182)</div>
<div class="t r" style="left:559.8px;top:342.2px;width:54.0px;color:#5876a6">(469,818)</div>
<div class="t r" style="left:615.0999999999999px;top:342.2px;width:54.0px;color:#5876a6">(466,455)</div>
<div class="t r" style="left:670.4px;top:342.2px;width:54.0px;color:#5876a6">(463,091)</div>
<div class="t r" style="left:725.7px;top:342.2px;width:54.0px;color:#5876a6">(459,728)</div>
<div class="t r" style="left:781.0px;top:342.2px;width:54.0px;color:#5876a6">(456,364)</div>
<div class="t r" style="left:836.3px;top:342.2px;width:54.0px;color:#5876a6">(453,000)</div>
<div class="t r" style="left:891.5999999999999px;top:342.2px;width:54.0px;color:#5876a6">(449,637)</div>
<div class="t r" style="left:946.9px;top:342.2px;width:54.0px;color:#5876a6">(446,273)</div>
<div class="t r" style="left:228.0px;top:354.7px;width:54.0px;color:#5876a6">(1,694,950)</div>
<div class="t r" style="left:283.3px;top:354.7px;width:54.0px;color:#5876a6">(1,694,850)</div>
<div class="t r" style="left:338.6px;top:354.7px;width:54.0px;color:#5876a6">(1,694,850)</div>
<div class="t r" style="left:393.9px;top:354.7px;width:54.0px;color:#5876a6">(1,694,850)</div>
<div class="t r" style="left:449.2px;top:354.7px;width:54.0px;color:#5876a6">(1,694,850)</div>
<div class="t r" style="left:504.5px;top:354.7px;width:54.0px;color:#5876a6">(1,694,850)</div>
<div class="t r" style="left:559.8px;top:354.7px;width:54.0px;color:#5876a6">(1,694,850)</div>
<div class="t r" style="left:615.0999999999999px;top:354.7px;width:54.0px;color:#5876a6">(1,694,850)</div>
<div class="t r" style="left:670.4px;top:354.7px;width:54.0px;color:#5876a6">(1,694,850)</div>
<div class="t r" style="left:725.7px;top:354.7px;width:54.0px;color:#5876a6">(1,694,850)</div>
<div class="t r" style="left:781.0px;top:354.7px;width:54.0px;color:#5876a6">(1,694,850)</div>
<div class="t r" style="left:836.3px;top:354.7px;width:54.0px;color:#5876a6">(1,694,850)</div>
<div class="t r" style="left:891.5999999999999px;top:354.7px;width:54.0px;color:#5876a6">(269,150)</div>
<div class="t r" style="left:946.9px;top:354.7px;width:54.0px;color:#5876a6">(269,150)</div>
<div class="t r" style="left:228.0px;top:367.2px;width:50.8px;color:#ffffff">8,484,950</div>
<div class="t r" style="left:283.3px;top:367.2px;width:50.8px;color:#ffffff">8,484,950</div>
<div class="t r" style="left:338.6px;top:367.2px;width:50.8px;color:#ffffff">8,484,950</div>
<div class="t r" style="left:393.9px;top:367.2px;width:50.8px;color:#ffffff">8,484,950</div>
<div class="t r" style="left:449.2px;top:367.2px;width:50.8px;color:#ffffff">8,484,950</div>
<div class="t r" style="left:504.5px;top:367.2px;width:50.8px;color:#ffffff">8,484,950</div>
<div class="t r" style="left:559.8px;top:367.2px;width:50.8px;color:#ffffff">8,484,950</div>
<div class="t r" style="left:615.0999999999999px;top:367.2px;width:50.8px;color:#ffffff">8,484,950</div>
<div class="t r" style="left:670.4px;top:367.2px;width:50.8px;color:#ffffff">8,484,950</div>
<div class="t r" style="left:725.7px;top:367.2px;width:50.8px;color:#ffffff">8,484,950</div>
<div class="t r" style="left:781.0px;top:367.2px;width:50.8px;color:#ffffff">8,484,950</div>
<div class="t r" style="left:836.3px;top:367.2px;width:50.8px;color:#ffffff">8,484,950</div>
<div class="t r" style="left:891.5999999999999px;top:367.2px;width:50.8px;color:#ffffff">1,356,450</div>
<div class="t r" style="left:946.9px;top:367.2px;width:50.8px;color:#ffffff">1,356,450</div>
<div class="t r" style="left:228.0px;top:379.7px;width:54.0px;color:#e4ebf7">(2,185,375)</div>
<div class="t r" style="left:283.3px;top:379.7px;width:54.0px;color:#e4ebf7">(2,182,111)</div>
<div class="t r" style="left:338.6px;top:379.7px;width:54.0px;color:#e4ebf7">(2,178,748)</div>
<div class="t r" style="left:393.9px;top:379.7px;width:54.0px;color:#e4ebf7">(2,175,384)</div>
<div class="t r" style="left:449.2px;top:379.7px;width:54.0px;color:#e4ebf7">(2,172,021)</div>
<div class="t r" style="left:504.5px;top:379.7px;width:54.0px;color:#e4ebf7">(2,168,657)</div>
<div class="t r" style="left:559.8px;top:379.7px;width:54.0px;color:#e4ebf7">(2,165,293)</div>
<div class="t r" style="left:615.0999999999999px;top:379.7px;width:54.0px;color:#e4ebf7">(2,161,930)</div>
<div class="t r" style="left:670.4px;top:379.7px;width:54.0px;color:#e4ebf7">(2,158,566)</div>
<div class="t r" style="left:725.7px;top:379.7px;width:54.0px;color:#e4ebf7">(2,155,203)</div>
<div class="t r" style="left:781.0px;top:379.7px;width:54.0px;color:#e4ebf7">(2,151,839)</div>
<div class="t r" style="left:836.3px;top:379.7px;width:54.0px;color:#e4ebf7">(2,148,475)</div>
<div class="t r" style="left:891.5999999999999px;top:379.7px;width:54.0px;color:#e4ebf7">(719,412)</div>
<div class="t r" style="left:946.9px;top:379.7px;width:54.0px;color:#e4ebf7">(716,048)</div>
<div class="t r" style="left:228.0px;top:392.2px;width:50.8px;color:#3f66a6">6,299,375</div>
<div class="t r" style="left:283.3px;top:392.2px;width:50.8px;color:#3f66a6">6,302,839</div>
<div class="t r" style="left:338.6px;top:392.2px;width:50.8px;color:#3f66a6">6,306,202</div>
<div class="t r" style="left:393.9px;top:392.2px;width:50.8px;color:#3f66a6">6,309,566</div>
<div class="t r" style="left:449.2px;top:392.2px;width:50.8px;color:#3f66a6">6,312,929</div>
<div class="t r" style="left:504.5px;top:392.2px;width:50.8px;color:#3f66a6">6,316,293</div>
<div class="t r" style="left:559.8px;top:392.2px;width:50.8px;color:#3f66a6">6,319,657</div>
<div class="t r" style="left:615.0999999999999px;top:392.2px;width:50.8px;color:#3f66a6">6,323,020</div>
<div class="t r" style="left:670.4px;top:392.2px;width:50.8px;color:#3f66a6">6,326,384</div>
<div class="t r" style="left:725.7px;top:392.2px;width:50.8px;color:#3f66a6">6,329,747</div>
<div class="t r" style="left:781.0px;top:392.2px;width:50.8px;color:#3f66a6">6,333,111</div>
<div class="t r" style="left:836.3px;top:392.2px;width:50.8px;color:#3f66a6">6,336,475</div>
<div class="t r" style="left:891.5999999999999px;top:392.2px;width:50.8px;color:#3f66a6">637,038</div>
<div class="t r" style="left:946.9px;top:392.2px;width:50.8px;color:#3f66a6">640,402</div>
<div class="t r" style="left:228.0px;top:404.7px;width:50.8px;color:#3f66a6">6,293,875</div>
<div class="t r" style="left:283.3px;top:404.7px;width:50.8px;color:#3f66a6">6,297,339</div>
<div class="t r" style="left:338.6px;top:404.7px;width:50.8px;color:#3f66a6">6,300,702</div>
<div class="t r" style="left:393.9px;top:404.7px;width:50.8px;color:#3f66a6">6,304,066</div>
<div class="t r" style="left:449.2px;top:404.7px;width:50.8px;color:#3f66a6">6,307,429</div>
<div class="t r" style="left:504.5px;top:404.7px;width:50.8px;color:#3f66a6">6,310,793</div>
<div class="t r" style="left:559.8px;top:404.7px;width:50.8px;color:#3f66a6">6,314,157</div>
<div class="t r" style="left:615.0999999999999px;top:404.7px;width:50.8px;color:#3f66a6">6,317,520</div>
<div class="t r" style="left:670.4px;top:404.7px;width:50.8px;color:#3f66a6">6,320,884</div>
<div class="t r" style="left:725.7px;top:404.7px;width:50.8px;color:#3f66a6">6,324,247</div>
<div class="t r" style="left:781.0px;top:404.7px;width:50.8px;color:#3f66a6">6,327,611</div>
<div class="t r" style="left:836.3px;top:404.7px;width:50.8px;color:#3f66a6">6,330,975</div>
<div class="t r" style="left:891.5999999999999px;top:404.7px;width:50.8px;color:#3f66a6">635,588</div>
<div class="t r" style="left:946.9px;top:404.7px;width:50.8px;color:#3f66a6">638,952</div>
<div class="t r" style="left:228.0px;top:429.7px;width:50.8px;color:#3f66a6">2,450,000</div>
<div class="t r" style="left:228.0px;top:454.7px;width:50.8px;color:#3f66a6">2,450,000</div>
<div class="t r" style="left:228.0px;top:479.7px;width:54.0px;color:#3f66a6">(2,450,000)</div>
<div class="t r" style="left:283.3px;top:429.7px;width:51.0px;color:#7f8ba0">-</div>
<div class="t r" style="left:338.6px;top:429.7px;width:51.0px;color:#7f8ba0">-</div>
<div class="t r" style="left:393.9px;top:429.7px;width:51.0px;color:#7f8ba0">-</div>
<div class="t r" style="left:449.2px;top:429.7px;width:51.0px;color:#7f8ba0">-</div>
<div class="t r" style="left:504.5px;top:429.7px;width:51.0px;color:#7f8ba0">-</div>
<div class="t r" style="left:559.8px;top:429.7px;width:51.0px;color:#7f8ba0">-</div>
<div class="t r" style="left:615.0999999999999px;top:429.7px;width:51.0px;color:#7f8ba0">-</div>
<div class="t r" style="left:670.4px;top:429.7px;width:51.0px;color:#7f8ba0">-</div>
<div class="t r" style="left:725.7px;top:429.7px;width:51.0px;color:#7f8ba0">-</div>
<div class="t r" style="left:781.0px;top:429.7px;width:51.0px;color:#7f8ba0">-</div>
<div class="t r" style="left:836.3px;top:429.7px;width:51.0px;color:#7f8ba0">-</div>
<div class="t r" style="left:891.5999999999999px;top:429.7px;width:51.0px;color:#7f8ba0">-</div>
<div class="t r" style="left:946.9px;top:429.7px;width:51.0px;color:#7f8ba0">-</div>
<div class="t r" style="left:283.3px;top:442.2px;width:51.0px;color:#7f8ba0">-</div>
<div class="t r" style="left:338.6px;top:442.2px;width:51.0px;color:#7f8ba0">-</div>
<div class="t r" style="left:393.9px;top:442.2px;width:51.0px;color:#7f8ba0">-</div>
<div class="t r" style="left:449.2px;top:442.2px;width:51.0px;color:#7f8ba0">-</div>
<div class="t r" style="left:504.5px;top:442.2px;width:51.0px;color:#7f8ba0">-</div>
<div class="t r" style="left:559.8px;top:442.2px;width:51.0px;color:#7f8ba0">-</div>
<div class="t r" style="left:615.0999999999999px;top:442.2px;width:51.0px;color:#7f8ba0">-</div>
<div class="t r" style="left:670.4px;top:442.2px;width:51.0px;color:#7f8ba0">-</div>
<div class="t r" style="left:725.7px;top:442.2px;width:51.0px;color:#7f8ba0">-</div>
<div class="t r" style="left:781.0px;top:442.2px;width:51.0px;color:#7f8ba0">-</div>
<div class="t r" style="left:836.3px;top:442.2px;width:51.0px;color:#7f8ba0">-</div>
<div class="t r" style="left:891.5999999999999px;top:442.2px;width:51.0px;color:#7f8ba0">-</div>
<div class="t r" style="left:946.9px;top:442.2px;width:51.0px;color:#7f8ba0">-</div>
<div class="t r" style="left:283.3px;top:454.7px;width:51.0px;color:#7f8ba0">-</div>
<div class="t r" style="left:338.6px;top:454.7px;width:51.0px;color:#7f8ba0">-</div>
<div class="t r" style="left:393.9px;top:454.7px;width:51.0px;color:#7f8ba0">-</div>
<div class="t r" style="left:449.2px;top:454.7px;width:51.0px;color:#7f8ba0">-</div>
<div class="t r" style="left:504.5px;top:454.7px;width:51.0px;color:#7f8ba0">-</div>
<div class="t r" style="left:559.8px;top:454.7px;width:51.0px;color:#7f8ba0">-</div>
<div class="t r" style="left:615.0999999999999px;top:454.7px;width:51.0px;color:#7f8ba0">-</div>
<div class="t r" style="left:670.4px;top:454.7px;width:51.0px;color:#7f8ba0">-</div>
<div class="t r" style="left:725.7px;top:454.7px;width:51.0px;color:#7f8ba0">-</div>
<div class="t r" style="left:781.0px;top:454.7px;width:51.0px;color:#7f8ba0">-</div>
<div class="t r" style="left:836.3px;top:454.7px;width:51.0px;color:#7f8ba0">-</div>
<div class="t r" style="left:891.5999999999999px;top:454.7px;width:51.0px;color:#7f8ba0">-</div>
<div class="t r" style="left:946.9px;top:454.7px;width:51.0px;color:#7f8ba0">-</div>
<div class="t r" style="left:283.3px;top:467.2px;width:51.0px;color:#7f8ba0">-</div>
<div class="t r" style="left:338.6px;top:467.2px;width:51.0px;color:#7f8ba0">-</div>
<div class="t r" style="left:393.9px;top:467.2px;width:51.0px;color:#7f8ba0">-</div>
<div class="t r" style="left:449.2px;top:467.2px;width:51.0px;color:#7f8ba0">-</div>
<div class="t r" style="left:504.5px;top:467.2px;width:51.0px;color:#7f8ba0">-</div>
<div class="t r" style="left:559.8px;top:467.2px;width:51.0px;color:#7f8ba0">-</div>
<div class="t r" style="left:615.0999999999999px;top:467.2px;width:51.0px;color:#7f8ba0">-</div>
<div class="t r" style="left:670.4px;top:467.2px;width:51.0px;color:#7f8ba0">-</div>
<div class="t r" style="left:725.7px;top:467.2px;width:51.0px;color:#7f8ba0">-</div>
<div class="t r" style="left:781.0px;top:467.2px;width:51.0px;color:#7f8ba0">-</div>
<div class="t r" style="left:836.3px;top:467.2px;width:51.0px;color:#7f8ba0">-</div>
<div class="t r" style="left:891.5999999999999px;top:467.2px;width:51.0px;color:#7f8ba0">-</div>
<div class="t r" style="left:946.9px;top:467.2px;width:51.0px;color:#7f8ba0">-</div>
<div class="t r" style="left:283.3px;top:479.7px;width:51.0px;color:#7f8ba0">-</div>
<div class="t r" style="left:338.6px;top:479.7px;width:51.0px;color:#7f8ba0">-</div>
<div class="t r" style="left:393.9px;top:479.7px;width:51.0px;color:#7f8ba0">-</div>
<div class="t r" style="left:449.2px;top:479.7px;width:51.0px;color:#7f8ba0">-</div>
<div class="t r" style="left:504.5px;top:479.7px;width:51.0px;color:#7f8ba0">-</div>
<div class="t r" style="left:559.8px;top:479.7px;width:51.0px;color:#7f8ba0">-</div>
<div class="t r" style="left:615.0999999999999px;top:479.7px;width:51.0px;color:#7f8ba0">-</div>
<div class="t r" style="left:670.4px;top:479.7px;width:51.0px;color:#7f8ba0">-</div>
<div class="t r" style="left:725.7px;top:479.7px;width:51.0px;color:#7f8ba0">-</div>
<div class="t r" style="left:781.0px;top:479.7px;width:51.0px;color:#7f8ba0">-</div>
<div class="t r" style="left:836.3px;top:479.7px;width:51.0px;color:#7f8ba0">-</div>
<div class="t r" style="left:891.5999999999999px;top:479.7px;width:51.0px;color:#7f8ba0">-</div>
<div class="t r" style="left:946.9px;top:479.7px;width:51.0px;color:#7f8ba0">-</div>
<div class="t r" style="left:283.3px;top:492.2px;width:51.0px;color:#7f8ba0">-</div>
<div class="t r" style="left:338.6px;top:492.2px;width:51.0px;color:#7f8ba0">-</div>
<div class="t r" style="left:393.9px;top:492.2px;width:51.0px;color:#7f8ba0">-</div>
<div class="t r" style="left:449.2px;top:492.2px;width:51.0px;color:#7f8ba0">-</div>
<div class="t r" style="left:504.5px;top:492.2px;width:51.0px;color:#7f8ba0">-</div>
<div class="t r" style="left:559.8px;top:492.2px;width:51.0px;color:#7f8ba0">-</div>
<div class="t r" style="left:615.0999999999999px;top:492.2px;width:51.0px;color:#7f8ba0">-</div>
<div class="t r" style="left:670.4px;top:492.2px;width:51.0px;color:#7f8ba0">-</div>
<div class="t r" style="left:725.7px;top:492.2px;width:51.0px;color:#7f8ba0">-</div>
<div class="t r" style="left:781.0px;top:492.2px;width:51.0px;color:#7f8ba0">-</div>
<div class="t r" style="left:836.3px;top:492.2px;width:51.0px;color:#7f8ba0">-</div>
<div class="t r" style="left:891.5999999999999px;top:492.2px;width:51.0px;color:#7f8ba0">-</div>
<div class="t r" style="left:946.9px;top:492.2px;width:51.0px;color:#7f8ba0">-</div>
<div class="t r" style="left:283.3px;top:504.7px;width:51.0px;color:#7f8ba0">-</div>
<div class="t r" style="left:338.6px;top:504.7px;width:51.0px;color:#7f8ba0">-</div>
<div class="t r" style="left:393.9px;top:504.7px;width:51.0px;color:#7f8ba0">-</div>
<div class="t r" style="left:449.2px;top:504.7px;width:51.0px;color:#7f8ba0">-</div>
<div class="t r" style="left:504.5px;top:504.7px;width:51.0px;color:#7f8ba0">-</div>
<div class="t r" style="left:559.8px;top:504.7px;width:51.0px;color:#7f8ba0">-</div>
<div class="t r" style="left:615.0999999999999px;top:504.7px;width:51.0px;color:#7f8ba0">-</div>
<div class="t r" style="left:670.4px;top:504.7px;width:51.0px;color:#7f8ba0">-</div>
<div class="t r" style="left:725.7px;top:504.7px;width:51.0px;color:#7f8ba0">-</div>
<div class="t r" style="left:781.0px;top:504.7px;width:51.0px;color:#7f8ba0">-</div>
<div class="t r" style="left:836.3px;top:504.7px;width:51.0px;color:#7f8ba0">-</div>
<div class="t r" style="left:891.5999999999999px;top:504.7px;width:51.0px;color:#7f8ba0">-</div>
<div class="t r" style="left:946.9px;top:504.7px;width:51.0px;color:#7f8ba0">-</div>
<div class="t r" style="left:283.3px;top:517.1999999999999px;width:51.0px;color:#7f8ba0">-</div>
<div class="t r" style="left:338.6px;top:517.1999999999999px;width:51.0px;color:#7f8ba0">-</div>
<div class="t r" style="left:393.9px;top:517.1999999999999px;width:51.0px;color:#7f8ba0">-</div>
<div class="t r" style="left:449.2px;top:517.1999999999999px;width:51.0px;color:#7f8ba0">-</div>
<div class="t r" style="left:504.5px;top:517.1999999999999px;width:51.0px;color:#7f8ba0">-</div>
<div class="t r" style="left:559.8px;top:517.1999999999999px;width:51.0px;color:#7f8ba0">-</div>
<div class="t r" style="left:615.0999999999999px;top:517.1999999999999px;width:51.0px;color:#7f8ba0">-</div>
<div class="t r" style="left:670.4px;top:517.1999999999999px;width:51.0px;color:#7f8ba0">-</div>
<div class="t r" style="left:725.7px;top:517.1999999999999px;width:51.0px;color:#7f8ba0">-</div>
<div class="t r" style="left:781.0px;top:517.1999999999999px;width:51.0px;color:#7f8ba0">-</div>
<div class="t r" style="left:836.3px;top:517.1999999999999px;width:51.0px;color:#7f8ba0">-</div>
<div class="t r" style="left:891.5999999999999px;top:517.1999999999999px;width:51.0px;color:#7f8ba0">-</div>
<div class="t r" style="left:946.9px;top:517.1999999999999px;width:51.0px;color:#7f8ba0">-</div>
<div class="t r" style="left:283.3px;top:529.6999999999999px;width:54.0px;color:#5876a6">(16,818)</div>
<div class="t r" style="left:338.6px;top:529.6999999999999px;width:54.0px;color:#5876a6">(16,818)</div>
<div class="t r" style="left:393.9px;top:529.6999999999999px;width:54.0px;color:#5876a6">(16,818)</div>
<div class="t r" style="left:449.2px;top:529.6999999999999px;width:54.0px;color:#5876a6">(16,818)</div>
<div class="t r" style="left:504.5px;top:529.6999999999999px;width:54.0px;color:#5876a6">(16,818)</div>
<div class="t r" style="left:559.8px;top:529.6999999999999px;width:54.0px;color:#5876a6">(16,818)</div>
<div class="t r" style="left:615.0999999999999px;top:529.6999999999999px;width:54.0px;color:#5876a6">(16,818)</div>
<div class="t r" style="left:670.4px;top:529.6999999999999px;width:54.0px;color:#5876a6">(16,818)</div>
<div class="t r" style="left:725.7px;top:529.6999999999999px;width:54.0px;color:#5876a6">(16,818)</div>
<div class="t r" style="left:781.0px;top:529.6999999999999px;width:54.0px;color:#5876a6">(16,818)</div>
<div class="t r" style="left:836.3px;top:529.6999999999999px;width:54.0px;color:#5876a6">(16,818)</div>
<div class="t r" style="left:891.5999999999999px;top:529.6999999999999px;width:54.0px;color:#5876a6">(16,818)</div>
<div class="t r" style="left:946.9px;top:529.6999999999999px;width:54.0px;color:#5876a6">(16,818)</div>
<div class="a" style="left:987px;top:51px;width:13px;height:508px;background:#fdfdfd;border-left:1px solid #ececec"></div>
<svg class="a" style="left:990px;top:53px" width="8" height="6" viewBox="0 0 8 6"><path d="M0.5 5.5 L4 1 L7.5 5.5 Z" fill="#555"/></svg>
<div class="a" style="left:991px;top:63px;width:6px;height:290px;border-radius:2px;background:#6b6b6b"></div>
<svg class="a" style="left:990px;top:552.5px" width="8" height="6" viewBox="0 0 8 6"><path d="M0.5 0.5 L4 5 L7.5 0.5 Z" fill="#555"/></svg>
<div class="a" style="left:0;top:559px;width:1000px;height:19px;background:#e8e8eb"></div>
<svg class="a" style="left:17px;top:564px" width="6" height="8" viewBox="0 0 6 8"><path d="M5 0.5 L1 4 L5 7.5" fill="none" stroke="#b9b9b9" stroke-width="1"/></svg>
<svg class="a" style="left:37px;top:564px" width="6" height="8" viewBox="0 0 6 8"><path d="M1 0.5 L5 4 L1 7.5" fill="none" stroke="#555" stroke-width="1"/></svg>
<div class="a" style="left:76px;top:563px;width:36px;text-align:center;font-size:9.2px;line-height:14px;color:#262626">How To</div>
<div class="a" style="left:120px;top:561px;width:62px;height:16px;background:#fdfbc4"></div>
<div class="a" style="left:120px;top:563px;width:62px;text-align:center;font-size:9.2px;line-height:14px;color:#262626">Inputs 2025</div>
<div class="a" style="left:186px;top:561px;width:42px;height:16px;background:#fdfbc4"></div>
<div class="a" style="left:186px;top:563px;width:42px;text-align:center;font-size:9.2px;line-height:14px;color:#262626">IS 2025</div>
<div class="a" style="left:233px;top:559px;width:42px;height:18px;background:#f8f8f8"></div>
<div class="a" style="left:233px;top:561.5px;width:42px;text-align:center;font-size:8.9px;line-height:14px;color:#262626;font-weight:bold">CF 2025</div>
<div class="a" style="left:281px;top:563px;width:48px;text-align:center;font-size:9.2px;line-height:14px;color:#262626">BS 2025</div>
<div class="a" style="left:333px;top:563px;width:119px;text-align:center;font-size:9.2px;line-height:14px;color:#262626">Statements Summary 2025</div>
<div class="a" style="left:458px;top:561px;width:61px;height:16px;background:#fbf99a"></div>
<div class="a" style="left:458px;top:563px;width:61px;text-align:center;font-size:9.2px;line-height:14px;color:#262626">CAPEX 2025</div>
<div class="a" style="left:524px;top:561px;width:56px;height:16px;background:#fdfbc4"></div>
<div class="a" style="left:524px;top:563px;width:56px;text-align:center;font-size:9.2px;line-height:14px;color:#262626">OPEX 2025</div>
<div class="a" style="left:587px;top:561px;width:59px;height:16px;background:#fdfbc4"></div>
<div class="a" style="left:587px;top:563px;width:59px;text-align:center;font-size:9.2px;line-height:14px;color:#262626">Inputs 2026</div>
<div class="a" style="left:651px;top:561px;width:42px;height:16px;background:#fdfbc4"></div>
<div class="a" style="left:651px;top:563px;width:42px;text-align:center;font-size:9.2px;line-height:14px;color:#262626">IS 2026</div>
<div class="a" style="left:697px;top:561px;width:44px;height:16px;background:#fdfbc4"></div>
<div class="a" style="left:697px;top:563px;width:44px;text-align:center;font-size:9.2px;line-height:14px;color:#262626">CF 2026</div>
<div class="a" style="left:746px;top:563px;width:45px;text-align:center;font-size:9.2px;line-height:14px;color:#262626">BS 2026</div>
<div class="a" style="left:800px;top:563px;width:85px;text-align:center;font-size:9.2px;line-height:14px;color:#262626">Statements Summa</div>
<div class="a" style="left:238px;top:574.5px;width:33px;height:1px;background:#2a8a55"></div>
<div class="a" style="left:887px;top:568px;width:1.3px;height:2px;background:#555"></div>
<div class="a" style="left:889.5px;top:568px;width:1.3px;height:2px;background:#555"></div>
<div class="a" style="left:892px;top:568px;width:1.3px;height:2px;background:#555"></div>
<div class="a" style="left:907px;top:568.6px;width:8.5px;height:1.3px;background:#333"></div>
<div class="a" style="left:910.6px;top:565px;width:1.3px;height:8.5px;background:#333"></div>
<div class="a" style="left:931px;top:565.8px;width:1.8px;height:1.8px;border-radius:50%;background:#333"></div>
<div class="a" style="left:931px;top:568.8px;width:1.8px;height:1.8px;border-radius:50%;background:#333"></div>
<div class="a" style="left:931px;top:571.8px;width:1.8px;height:1.8px;border-radius:50%;background:#333"></div>
<svg class="a" style="left:947px;top:566px" width="5" height="6" viewBox="0 0 5 6"><path d="M4.5 0 L0 3 L4.5 6 Z" fill="#444"/></svg>
<div class="a" style="left:953px;top:566px;width:20px;height:6px;border-radius:3px;background:#6f6f6f"></div>
<svg class="a" style="left:980px;top:566px" width="5" height="6" viewBox="0 0 5 6"><path d="M0.5 0 L5 3 L0.5 6 Z" fill="#444"/></svg>
<div class="a" style="left:0;top:578px;width:1000px;height:14px;background:#f3f3f3"></div>
<div class="a" style="left:8px;top:582px;font-size:7px;line-height:11px;color:#444">Ready</div>
<svg class="a" style="left:40px;top:582px" width="10" height="10" viewBox="0 0 10 10"><path d="M0.5 0.5 H9.5 V4 M0.5 0.5 V9.5 H4 M0.5 3 H9.5" fill="none" stroke="#555"/><circle cx="6.8" cy="6.8" r="2.4" fill="none" stroke="#555"/><circle cx="6.8" cy="6.8" r="1" fill="#555"/></svg>
<svg class="a" style="left:59px;top:581px" width="11" height="11" viewBox="0 0 11 11"><circle cx="5" cy="1.8" r="1.2" fill="#444"/><path d="M1 3.5 H9 M5 3.5 V7 L2.5 10.5 M5 7 L7.5 10.5" fill="none" stroke="#444" stroke-width="1"/></svg>
<div class="a b" style="left:72px;top:582px;font-size:6.75px;line-height:11px;color:#222">Accessibility: Investigate</div>
<div class="a" style="left:809px;top:579px;width:22px;height:13px;background:#e4e4e4"></div>
<svg class="a" style="left:814.5px;top:581.5px" width="10" height="10" viewBox="0 0 10 10"><rect x="0.5" y="0.5" width="9" height="9" fill="none" stroke="#555"/><path d="M0.5 3.5 H9.5 M0.5 6.5 H9.5 M3.5 0.5 V9.5 M6.5 0.5 V9.5" stroke="#555"/></svg>
<svg class="a" style="left:840.5px;top:581.5px" width="10" height="10" viewBox="0 0 10 10"><rect x="0.5" y="0.5" width="9" height="9" fill="none" stroke="#555"/><path d="M2.5 0.5 V9.5 M7.5 0.5 V9.5 M2.5 3 H7.5 M2.5 5 H7.5 M2.5 7 H7.5" stroke="#777"/></svg>
<svg class="a" style="left:866.5px;top:581.5px" width="10" height="10" viewBox="0 0 10 10"><rect x="0.5" y="0.5" width="9" height="9" fill="none" stroke="#555"/><path d="M0.5 6.5 H4.5 V9.5 M4.5 0.5 V6.5" fill="none" stroke="#555"/></svg>
<div class="a" style="left:888px;top:586.5px;width:5px;height:1px;background:#666"></div>
<div class="a" style="left:896px;top:587px;width:64px;height:1px;background:#777"></div>
<div class="a" style="left:927.5px;top:583px;width:2.5px;height:8px;background:#444"></div>
<div class="a" style="left:964px;top:586.5px;width:5px;height:1px;background:#666"></div>
<div class="a" style="left:966px;top:584.5px;width:1px;height:5px;background:#666"></div>
<div class="a" style="left:978px;top:582px;font-size:6.8px;line-height:11px;color:#444">100%</div>
</body></html>
